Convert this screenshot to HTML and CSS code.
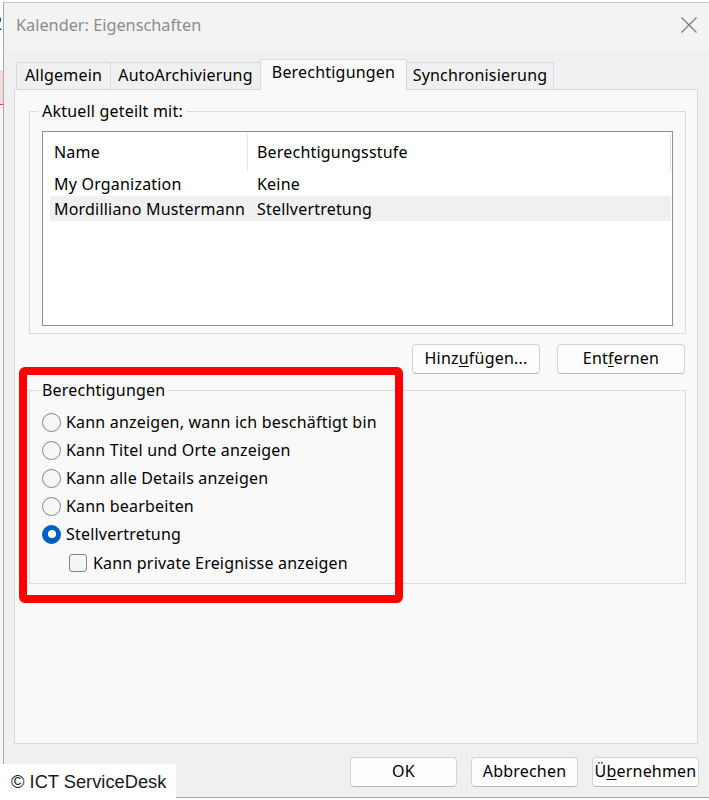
FILE: index.html
```html
<!DOCTYPE html>
<html lang="de">
<head>
<meta charset="utf-8">
<title>Kalender: Eigenschaften</title>
<link rel="stylesheet" href="styles.css">
</head>
<body>
  <div class="behind">
    <div class="behind-top"><span class="behind-digit">2</span></div>
    <div class="behind-pink"></div>
    <div class="behind-rest"></div>
  </div>
  <div class="dialog">
    <div class="titlebar">
      <span class="title">Kalender: Eigenschaften</span>
      <svg class="close" width="16" height="16" viewBox="0 0 16 16"><path d="M0.5 0.5 L15.5 15.5 M15.5 0.5 L0.5 15.5" stroke="#7a7a7a" stroke-width="1.2" fill="none"/></svg>
    </div>
    <div class="tabs">
      <div class="tab tab-allg">Allgemein</div>
      <div class="tab tab-auto">AutoArchivierung</div>
      <div class="tab tab-ber active">Berechtigungen</div>
      <div class="tab tab-sync">Synchronisierung</div>
    </div>
    <div class="panel">
      <fieldset class="group group-shared">
        <legend>Aktuell geteilt mit:</legend>
        <div class="list">
          <div class="list-row list-head">
            <div class="cell c1">Name</div>
            <div class="cell c2">Berechtigungsstufe</div>
          </div>
          <div class="list-row">
            <div class="cell c1">My Organization</div>
            <div class="cell c2">Keine</div>
          </div>
          <div class="list-row selected">
            <div class="cell c1">Mordilliano Mustermann</div>
            <div class="cell c2">Stellvertretung</div>
          </div>
        </div>
      </fieldset>
      <div class="list-buttons">
        <button class="btn btn-wide">Hinz<u>u</u>fügen...</button>
        <button class="btn btn-wide">Ent<u>f</u>ernen</button>
      </div>
      <fieldset class="group group-perm">
        <legend>Berechtigungen</legend>
        <div class="opt"><span class="radio"></span><span>Kann anzeigen, wann ich beschäftigt bin</span></div>
        <div class="opt"><span class="radio"></span><span>Kann Titel und Orte anzeigen</span></div>
        <div class="opt"><span class="radio"></span><span>Kann alle Details anzeigen</span></div>
        <div class="opt"><span class="radio"></span><span>Kann bearbeiten</span></div>
        <div class="opt"><span class="radio checked"></span><span>Stellvertretung</span></div>
        <div class="opt opt-sub"><span class="check"></span><span>Kann private Ereignisse anzeigen</span></div>
      </fieldset>
    </div>
    <div class="footer">
      <button class="btn btn-foot">OK</button>
      <button class="btn btn-foot">Abbrechen</button>
      <button class="btn btn-foot">Ü<u>b</u>ernehmen</button>
    </div>
  </div>
  <div class="highlight-box"></div>
  <div class="watermark">© ICT ServiceDesk</div>
</body>
</html>
```
FILE: styles.css
```css
* { box-sizing: border-box; }
html, body { margin: 0; padding: 0; }
body {
  width: 709px;
  height: 800px;
  overflow: hidden;
  background: #ffffff;
  font-family: "Noto Sans", "Open Sans", sans-serif;
  font-size: 16px;
  letter-spacing: 0.2px;
  color: #000;
  position: relative;
  display: flex;
  align-items: flex-start;
}

/* window behind the dialog */
.behind { width: 3px; flex: none; display: flex; flex-direction: column; height: 800px; overflow: hidden; }
.behind-top { height: 70px; position: relative; overflow: hidden; background: #fdfdfd; }
.behind-digit { display: block; margin: 12px 0 0 -9px; font: 20px "Liberation Sans", sans-serif; color: #222; }
.behind-pink { height: 35px; background: #f3dada; border-bottom: 1px solid #e23a3a; }
.behind-rest { flex: 1; background: #f7f7f7; }

.dialog {
  flex: 1;
  margin-top: 2px;
  height: 796px;
  border-top: 1px solid #c4c4c4;
  border-left: 1px solid #a8a8a8;
  border-bottom: 1px solid #a8a8a8;
  background: #f0f0f0;
  display: flex;
  flex-direction: column;
}

.titlebar {
  height: 46px;
  flex: none;
  background: #f3f3f3;
  display: flex;
  align-items: center;
  justify-content: space-between;
  padding: 0 12px 0 12px;
}
.title { font-size: 16.3px; letter-spacing: 0; color: #8c8c8c; line-height: 20px; margin-top: -2px; }
.close { display: block; margin-top: -2px; }

.tabs {
  display: flex;
  align-items: flex-end;
  margin: 10px 0 -1px 12px;
  height: 31px;
  position: relative;
  z-index: 1;
}
.tab {
  height: 27px;
  margin-bottom: 1px;
  border: 1px solid #d9d9d9;
  border-bottom: none;
  background: #f0f0f0;
  display: flex;
  align-items: center;
  justify-content: center;
  line-height: 20px;
  padding-bottom: 2px;
  margin-left: -1px;
}
.tab:first-child { margin-left: 0; }
.tab.active { height: 31px; margin-bottom: 0; background: #f9f9f9; padding-bottom: 6px; }
.tab-allg { width: 95px; }
.tab-auto { width: 151px; }
.tab-ber { width: 147px; }
.tab-sync { width: 148px; }

.panel {
  margin-left: 10px;
  width: 684px;
  height: 655px;
  flex: none;
  border: 1px solid #d9d9d9;
  background: #f9f9f9;
  padding: 11px 11px 0 14px;
}

.group {
  margin: 0;
  min-width: 0;
  border: 1px solid #dcdcdc;
}
.group legend {
  padding: 0 3px;
  margin-left: -3px;
  line-height: 20px;
}
.group-shared { padding: 0 13px 7px 12px; }

.list {
  margin-top: 10px;
  width: 631px;
  height: 195px;
  border: 1px solid #8d929a;
  background: #ffffff;
  padding: 0 1px 0 7px;
}
.list-row { display: grid; grid-template-columns: 198px 423px; height: 25px; }
.list-head { margin-top: 2px; height: 37px; }
.cell { display: flex; align-items: center; white-space: nowrap; line-height: 20px; }
.c1 { padding-left: 4px; }
.c2 { padding-left: 9px; }
.list-head .cell { border-right: 1px solid #e5e5e5; padding-bottom: 1px; }
.list-row.selected { background: #f0f0f0; }

.list-buttons {
  display: flex;
  justify-content: flex-end;
  gap: 17px;
  margin-top: 10px;
  padding-right: 1px;
}
.btn {
  font-family: inherit;
  font-size: 16px;
  letter-spacing: 0.2px;
  color: #000;
  background: #fdfdfd;
  border: 1px solid #d3d3d3;
  border-bottom-color: #b8b8b8;
  border-radius: 4px;
  height: 30px;
  padding: 0 0 2px;
  line-height: 20px;
}
.btn u { text-underline-offset: 2px; }
.btn-wide { width: 128px; }
.btn-foot { width: 107px; }

.group-perm { margin-top: 6px; padding: 8px 12px 6px 12px; }
.opt { display: flex; align-items: center; height: 28px; gap: 5px; line-height: 20px; }
.opt-sub { margin-top: 1px; padding-left: 27px; gap: 6px; }
.radio {
  width: 19px;
  height: 19px;
  flex: none;
  border-radius: 50%;
  border: 1px solid #858585;
  background: #f6f6f6;
}
.radio.checked {
  background: #005fb8;
  border-color: #005fb8;
  display: flex;
  align-items: center;
  justify-content: center;
}
.radio.checked::after {
  content: "";
  width: 8px;
  height: 8px;
  border-radius: 50%;
  background: #ffffff;
}
.check {
  width: 18px;
  height: 18px;
  flex: none;
  border: 1px solid #858585;
  border-radius: 3px;
  background: #f5f5f5;
}

.footer {
  display: flex;
  justify-content: flex-end;
  gap: 14px;
  margin-top: 13px;
  padding-right: 10px;
}

.highlight-box {
  position: absolute;
  left: 19px;
  top: 367px;
  width: 384px;
  height: 236px;
  border: 8px solid #ff0000;
  border-radius: 6px;
}

.watermark {
  position: absolute;
  left: 0;
  top: 764px;
  width: 176px;
  height: 36px;
  background: #ffffff;
  font-family: "Liberation Sans", Arial, sans-serif;
  font-size: 18.3px;
  letter-spacing: 0;
  line-height: 36px;
  padding-left: 11px;
  color: #1a1a1a;
}
```
